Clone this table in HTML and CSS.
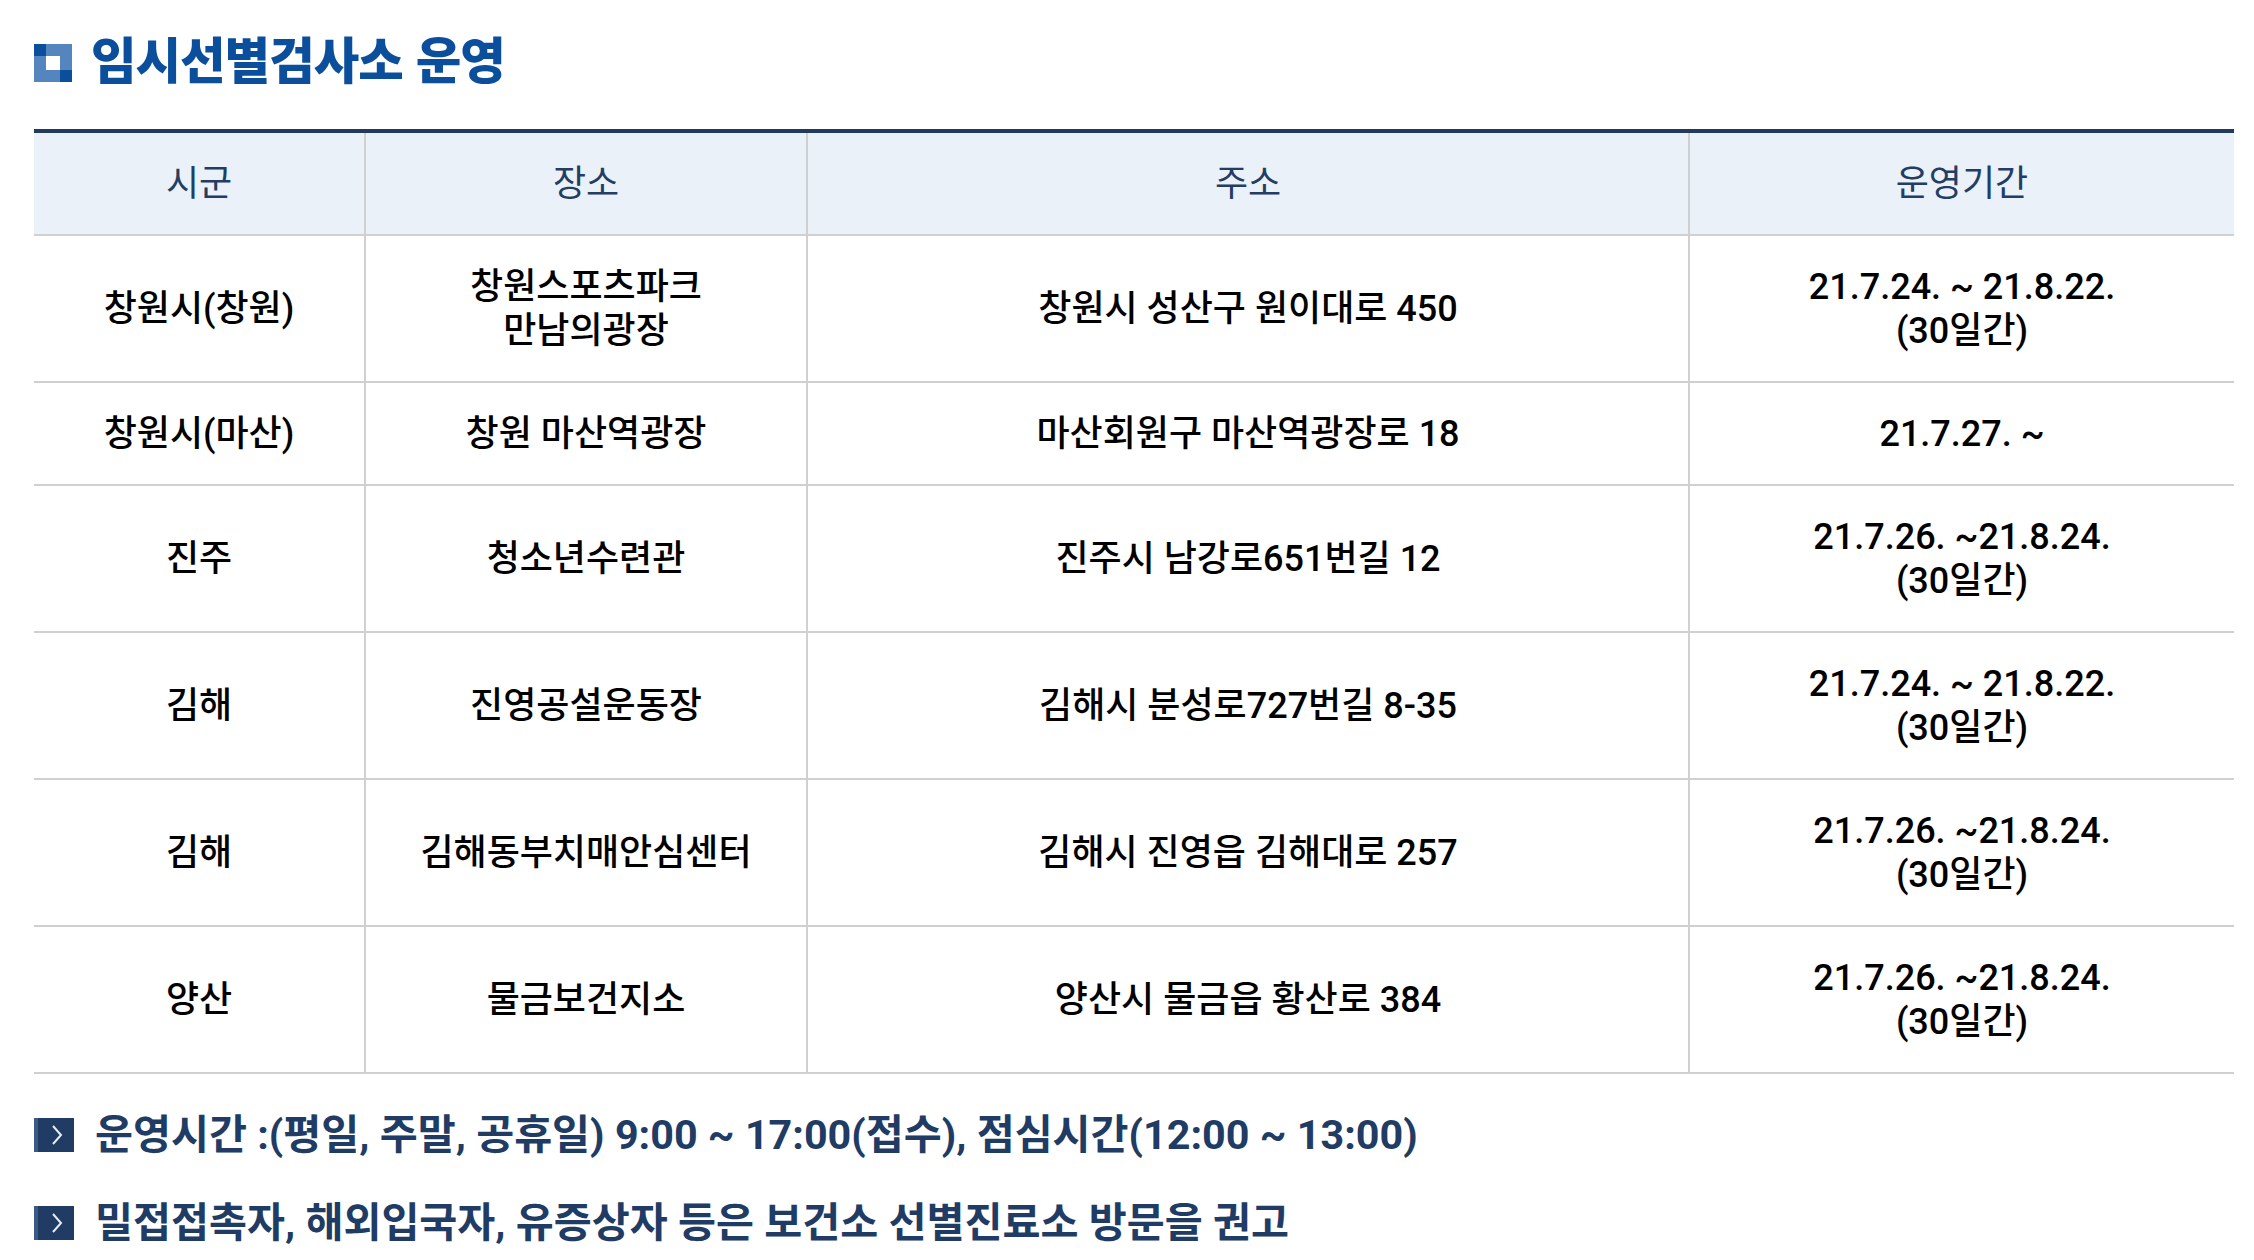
FILE: index.html
```html
<!DOCTYPE html>
<html lang="ko">
<head>
<meta charset="utf-8">
<title>임시선별검사소 운영</title>
<link rel="stylesheet" href="styles.css">
</head>
<body>
<div class="wrap">
  <h2 class="title"><span class="title-ico"><span class="c dark"></span><span class="c"></span><span class="c"></span><span class="c"></span><span class="c white"></span><span class="c"></span><span class="c"></span><span class="c"></span><span class="c dark"></span></span><span class="title-text">임시선별검사소 운영</span></h2>
  <table class="tbl">
    <colgroup>
      <col class="c1"><col class="c2"><col class="c3"><col class="c4">
    </colgroup>
    <thead>
      <tr><th>시군</th><th>장소</th><th>주소</th><th>운영기간</th></tr>
    </thead>
    <tbody>
      <tr><td>창원시(창원)</td><td>창원스포츠파크<br>만남의광장</td><td>창원시 성산구 원이대로 450</td><td>21.7.24. ~ 21.8.22.<br>(30일간)</td></tr>
      <tr><td>창원시(마산)</td><td>창원 마산역광장</td><td>마산회원구 마산역광장로 18</td><td>21.7.27. ~</td></tr>
      <tr><td>진주</td><td>청소년수련관</td><td>진주시 남강로651번길 12</td><td>21.7.26. ~21.8.24.<br>(30일간)</td></tr>
      <tr><td>김해</td><td>진영공설운동장</td><td>김해시 분성로727번길 8-35</td><td>21.7.24. ~ 21.8.22.<br>(30일간)</td></tr>
      <tr><td>김해</td><td>김해동부치매안심센터</td><td>김해시 진영읍 김해대로 257</td><td>21.7.26. ~21.8.24.<br>(30일간)</td></tr>
      <tr><td>양산</td><td>물금보건지소</td><td>양산시 물금읍 황산로 384</td><td>21.7.26. ~21.8.24.<br>(30일간)</td></tr>
    </tbody>
  </table>
  <ul class="notes">
    <li><span class="arrow"><svg width="40" height="34" viewBox="0 0 40 34"><rect width="40" height="34" fill="#213c64"/><rect width="4" height="34" fill="#3b5a86"/><polyline points="19,8 27,17 19,26" fill="none" stroke="#e8edf4" stroke-width="2"/></svg></span><span class="note-text">운영시간 :(평일, 주말, 공휴일) 9:00 ~ 17:00(접수), 점심시간(12:00 ~ 13:00)</span></li>
    <li><span class="arrow"><svg width="40" height="34" viewBox="0 0 40 34"><rect width="40" height="34" fill="#213c64"/><rect width="4" height="34" fill="#3b5a86"/><polyline points="19,8 27,17 19,26" fill="none" stroke="#e8edf4" stroke-width="2"/></svg></span><span class="note-text">밀접접촉자, 해외입국자, 유증상자 등은 보건소 선별진료소 방문을 권고</span></li>
  </ul>
</div>
</body>
</html>
```

FILE: styles.css
```css
html, body {
  margin: 0;
  padding: 0;
  background: #ffffff;
}
body {
  font-family: Roboto, "Noto Sans CJK KR", "Noto Sans", sans-serif;
  color: #000;
}
.wrap {
  width: 2200px;
  padding: 44px 0 0 34px;
}
.title {
  display: flex;
  align-items: center;
  margin: 0 0 47px 0;
  height: 38px;
}
.title-ico {
  display: grid;
  grid-template-columns: 12px 14px 12px;
  grid-template-rows: 12px 14px 12px;
  width: 38px;
  height: 38px;
  flex: none;
}
.title-ico .c { background: #5585bf; }
.title-ico .c.dark { background: #0b4f9c; }
.title-ico .c.white { background: #ffffff; }
.title-text {
  margin-left: 19px;
  font-family: "Noto Sans CJK KR", sans-serif;
  font-size: 49.5px;
  font-weight: 900;
  color: #0b4f9c;
  letter-spacing: -1px;
  line-height: 1;
  position: relative;
  top: -5px;
}
.tbl {
  width: 2200px;
  border-collapse: collapse;
  table-layout: fixed;
}
.c1 { width: 331px; }
.c2 { width: 442px; }
.c3 { width: 882px; }
.c4 { width: 545px; }
.tbl th, .tbl td {
  text-align: center;
  vertical-align: middle;
  padding: 29px 0 28px;
  line-height: 44px;
  font-size: 36px;
  border-bottom: 2px solid #d0d0d0;
  border-left: 2px solid #d0d0d0;
}
.tbl th:first-child, .tbl td:first-child { border-left: none; }
.tbl th {
  background: #eaf1f8;
  border-top: 4px solid #213a5e;
  color: #243d63;
  font-weight: 400;
}
.tbl td {
  font-weight: 500;
  color: #000;
}
.notes {
  list-style: none;
  margin: 31px 0 0 0;
  padding: 0;
}
.notes li {
  display: flex;
  align-items: center;
  height: 60px;
  margin-bottom: 28px;
}
.arrow {
  display: flex;
  flex: none;
  width: 40px;
  height: 34px;
}
.note-text {
  margin-left: 21px;
  font-size: 41.3px;
  font-weight: 700;
  color: #213c64;
  letter-spacing: 0;
  position: relative;
  top: -4px;
}
```
